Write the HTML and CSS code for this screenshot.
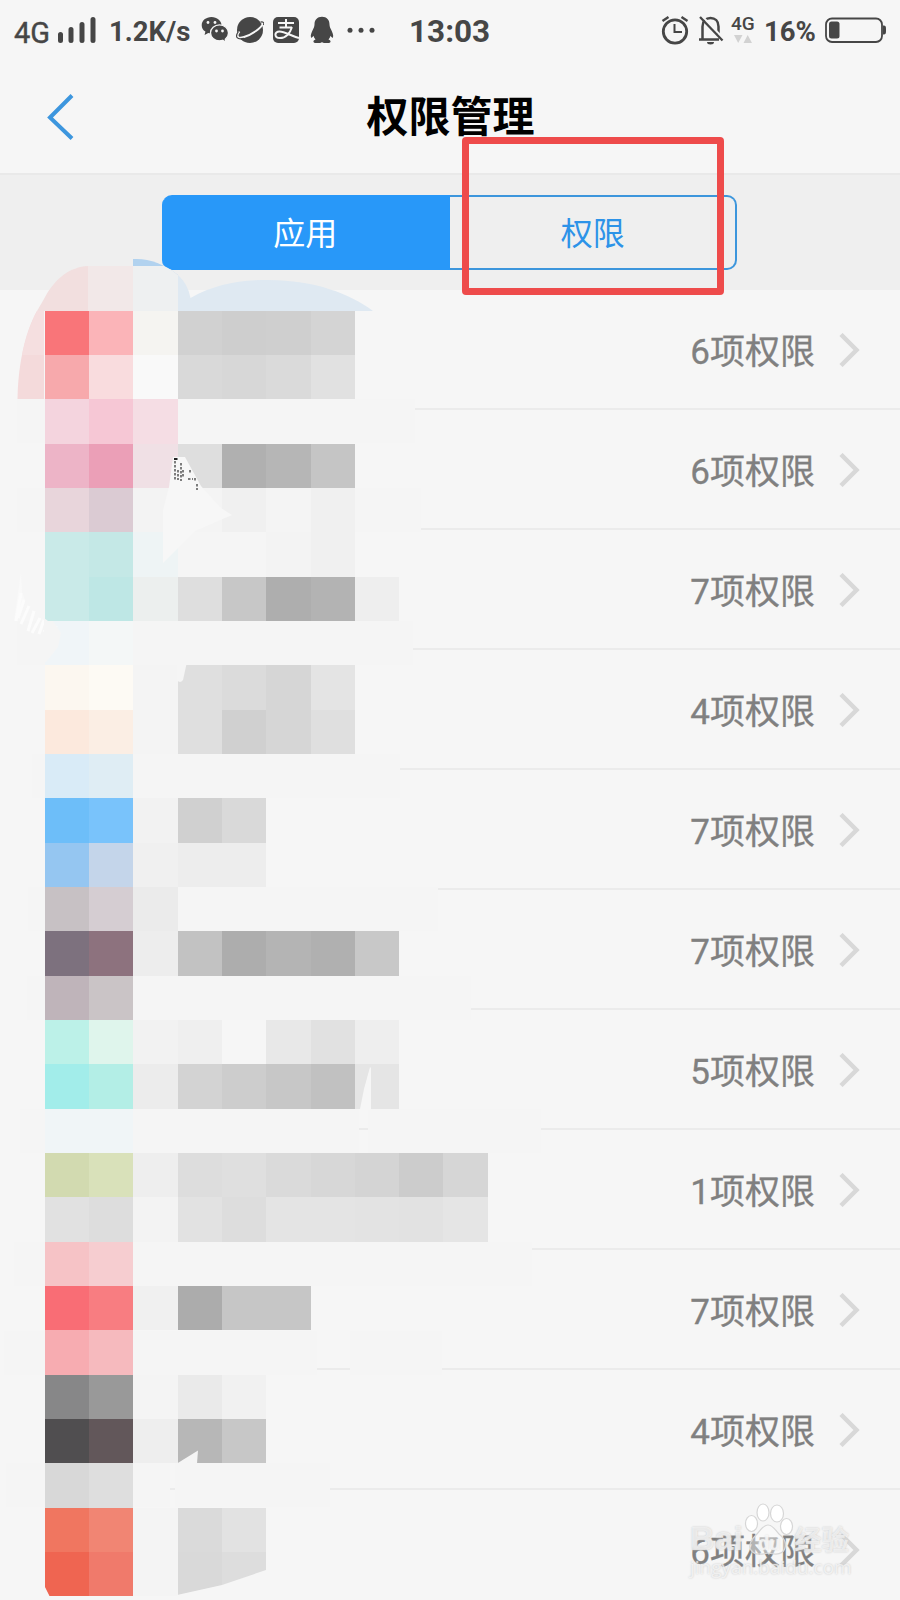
FILE: index.html
```
<!DOCTYPE html>
<html lang="zh-CN">
<head>
    <meta charset="UTF-8">
    <title>权限管理</title>
    <link rel="stylesheet" href="styles.css">
</head>
<body>
<div class="status">
    <span class="net">4G</span>
    <svg class="signal" width="38" height="26" viewBox="0 0 38 26"><path d="M2.500 17.500v6M13 12.500v11M24 7.500v16M35 2.500v21" stroke="#464646" stroke-width="5" stroke-linecap="round"/></svg>
    <span class="speed">1.2K/s</span>
    <svg class="ico wechat" width="28" height="28" viewBox="0 0 28 28">
        <path d="M10.500 1C5 1 .7 4.600.7 9.200c0 2.700 1.400 5 3.700 6.400L3.600 19l3.600-2.100c1 .3 2.100.4 3.300.4 5.500 0 10-3.600 10-8.100S16 1 10.500 1z" fill="#464646"/>
        <path d="M18.500 8.800c-5 0-9 3.600-9 8s4 8 9 8c1.100 0 2.200-.2 3.200-.5l3.300 2-.7-3.100c2-1.500 3.200-3.700 3.200-6.300 0-4.500-4-8.100-9-8.100z" fill="#464646" stroke="#f6f6f6" stroke-width="1.300"/>
        <g fill="#f6f6f6"><circle cx="7" cy="6.500" r="1.400"/><circle cx="14" cy="6.500" r="1.400"/><circle cx="15.500" cy="15" r="1.400"/><circle cx="21.500" cy="15" r="1.400"/></g>
    </svg>
    <svg class="ico planet" width="28" height="28" viewBox="0 0 28 28">
        <circle cx="14" cy="14" r="13" fill="#464646"/>
        <path d="M3.500 15.500C-.5 20.500 1.500 23 8 21 16 18.500 25.500 12 27 7.500c.3-1.300-.8-1.800-2.500-1.200" fill="none" stroke="#f6f6f6" stroke-width="2"/>
        <path d="M2.500 15.500C-1.500 21 1 24 8 22.300M27.500 9c1-2.500-.5-3.600-3-2.900" fill="none" stroke="#464646" stroke-width="1.200"/>
    </svg>
    <svg class="ico alipay" width="28" height="28" viewBox="0 0 28 28">
        <rect x="1" y="1" width="26" height="26" rx="5" fill="#464646"/>
        <path d="M6 7h16M14 3v8.500M7.500 11.500h12.500M20 11c-2 6.500-6.500 11-12 11-6 0-6-6.500-.5-6.500C13 15.500 19 20 27 22" fill="none" stroke="#f6f6f6" stroke-width="2"/>
    </svg>
    <svg class="ico qq" width="24" height="28" viewBox="0 0 24 28">
        <path d="M12 .8C7.200.8 4.500 4 4.500 8.500c-.1 2-.6 3-1.300 4.500C1.500 16.500.3 19 1 21.500c.6.800 1.700-.5 2.500-1.700.3 1.500 1 2.700 2 3.700-1.500.7-2.300 1.500-2 2.400.6 1.600 7 1.400 8.500.3 1.500 1.100 7.900 1.300 8.500-.3.300-.9-.5-1.700-2-2.400 1-1 1.700-2.200 2-3.700.8 1.200 1.900 2.500 2.500 1.700.7-2.500-.5-5-2.200-8.500-.7-1.500-1.200-2.500-1.300-4.500C19.500 4 16.800.8 12 .8z" fill="#464646"/>
    </svg>
    <svg class="ico dots" width="28" height="28" viewBox="0 0 28 28"><g fill="#464646"><circle cx="3" cy="14.300" r="2.500"/><circle cx="14" cy="14.300" r="2.500"/><circle cx="25" cy="14.300" r="2.500"/></g></svg>
    <span class="clock">13:03</span>
    <svg class="ico alarm" width="28" height="30" viewBox="0 0 28 30">
        <g fill="none" stroke="#464646"><circle cx="14" cy="16.500" r="11.700" stroke-width="2.800"/><path d="M13.500 9v8h7.500" stroke-width="2"/><path d="M1.500 6l6-4M26.500 6l-6-4" stroke-width="2.400"/></g>
    </svg>
    <svg class="ico bell" width="26" height="30" viewBox="0 0 26 30">
        <path d="M4.500 24V11.500C4.500 6 8 3 12.500 3S20.500 6 20.500 11.500V19M1 24.500h20" fill="none" stroke="#464646" stroke-width="2.500"/>
        <path d="M4 1l21 22" stroke="#f6f6f6" stroke-width="2"/>
        <path d="M2 2l22.500 23.500" stroke="#464646" stroke-width="2.300"/>
        <path d="M9 27h7a3.500 2.500 0 0 1-7 0z" fill="#464646"/>
    </svg>
    <span class="sim">4G<svg width="18" height="8" viewBox="0 0 18 8"><path d="M0 0h8.500L4.200 8zM9.500 8h8.500L13.700 0z" fill="#d2d2d2"/></svg></span>
    <span class="percent">16%</span>
    <svg class="ico battery" width="62" height="28" viewBox="0 0 62 28">
        <rect x="1" y="2.500" width="56" height="23.500" rx="6" fill="none" stroke="#464646" stroke-width="1.800"/>
        <rect x="4" y="5.500" width="10.500" height="17" rx="2.500" fill="#464646"/>
        <path d="M58 9.500c3 0 3 1 3 4.500s0 4.500-3 4.500z" fill="#464646"/>
    </svg>
</div>
<div class="header">
    <svg class="back" width="28" height="48" viewBox="0 0 28 48"><path d="M25 2.500L3 24.500l22 21" fill="none" stroke="#3d96de" stroke-width="4"/></svg>
    <h1>权限管理</h1>
</div>
<div class="tabs">
    <div class="tab on">应用</div>
    <div class="tab">权限</div>
    <div class="mark"></div>
</div>
<ul id="list" class="list"></ul>

<svg class="mosaic" width="560" height="1350" viewBox="0 250 560 1350">
    <!-- top edge of the brushed area -->
    <path d="M133 259C148 258 163 263 178 275V311H133z" fill="#b1d2ef"/>
    <path d="M17.500 399C18 360 27 329 37 311H44V399z" fill="#f4dadb"/>
    <path d="M22 355C25 338 31 322 37 311H44V355z" fill="#f5dfe0"/>
    <path d="M37 311L44 299C55 278 70 267 88 266V311z" fill="#f2dfdf"/>
    <path d="M88 266H133V311H88z" fill="#f2e8e8"/>
    <path d="M133 266H164Q171 269 178 275V311H133z" fill="#eef0f1"/>
    <path d="M178 275Q188 284 190.500 298C215 284 240 280 268 280 315 280 350 294 373 311H178z" fill="#dfe9f2"/>
    <g id="covers" fill="#f5f5f5"></g>
    <g id="cells" shape-rendering="crispEdges"></g>
    <!-- brush gaps -->
    <path d="M173 457h12L201 486 221 508 232 515 195 531 163 563V510L169 487z" fill="#f7f7f7"/>
    <path d="M175 461v20M178 470v10M181 463v18M183 470v7M188 479h5M190 470v4M195 478v4M197 484v6" stroke="#555" stroke-width="1.500" stroke-dasharray="2.500 1.500" fill="none"/>
    <path d="M174 459h3.500" stroke="#222" stroke-width="2"/>
    <path d="M21 573l-3 20-4 28 5-3 6-18-3-8z" fill="#f9f9f9"/>
    <path d="M21 593l-5 28M24 600l-6 18M29 606l-8 18M34 611l-6 20M40 618l-8 15M44 620l-5 14M50 624l-6 8M56 626l-3 10" stroke="#fcfcfc" stroke-width="3"/>
    <path d="M44 618l4 3h-4zM53 621l8 12-3 14-12 15H44V621z" fill="#f5f5f5"/>
    <path d="M177 664h9.500L183 680q-3 4-6 0z" fill="#f5f5f5"/>
    <path d="M370 1067l-6 22-4 20v1h11v-42z" fill="#f6f6f6"/>
    <path d="M177 1463.500l21-13-1 13z" fill="#f5f5f5"/>
    <path d="M44 1585l6 12h-6zM177 1595l45-10 44-15v28h-89z" fill="#f6f6f6"/>
</svg>

<div class="logo">
    <div class="logo-name"><span class="bai">Bai</span><span class="du">du</span>经验</div>
    <svg class="paw" width="50" height="54" viewBox="0 0 50 54"><g fill="#fff" stroke="#d6d6d6" stroke-width="1.200"><ellipse cx="7.500" cy="20.500" rx="6" ry="8"/><ellipse cx="19" cy="9.500" rx="6" ry="8.500"/><ellipse cx="33" cy="10.500" rx="6.500" ry="8.500"/><ellipse cx="42.500" cy="23.500" rx="6" ry="8"/><path d="M24 22c5 0 7 5 11 9 5 4 8 8 6 14-2 7-9 7-17 5-8 2-16 2-18-5-1-6 3-10 7-14s6-9 11-9z" fill-opacity=".4"/></g></svg>
    <div class="logo-url">jingyan.baidu.com</div>
</div>
<script>
    var counts = [6, 6, 7, 4, 7, 7, 5, 1, 7, 4, 6];
    var html = "";
    for(var i = 0; i < counts.length; i++){
        html += '<li class="row"><span>' + counts[i] + '项权限</span>' +
            '<svg width="21" height="34" viewBox="0 0 21 34"><path d="M2 1.500L17.500 17 2 32.500" fill="none" stroke="#d8d8d8" stroke-width="4.500"/></svg></li>';
    }
    document.getElementById("list").innerHTML = html;

    // each line is one mosaic row, starting at the second column
    var colors = [
        "f97579 fbb4b8 f5f4f1 d1d1d1 cecece cfcfcf d4d4d4",
        "f7a9ac f9dcde f9f9f9 d9d9d9 d7d7d7 dadada e1e1e1",
        "f4d4de f6c7d5 f5dde4",
        "edb4c7 eb9fb7 f0e0e5 dedede b0b0b0 b6b6b6 c5c5c5",
        "e8d5db dbcbd3 f3f3f3 f4f4f4 f0f0f0 f4f4f4 f0f0f0",
        "c9eae8 c4e8e6 eef4f5 f5f5f5 f5f5f5 f3f3f3 f0f0f0",
        "c9eae8 bee7e5 ecefee dedede c7c7c7 aeaeae b3b3b3 eeeeee",
        "f0f5f8 f4f7f7",
        "fcf7f0 fdfaf4 f4f4f4 dfdfdf dbdbdb d6d6d6 e4e4e4",
        "fce9dd fbeee4 f4f4f4 dfdfdf d0d0d0 d6d6d6 dfdfdf",
        "d9ebf7 dfedf4",
        "6dbef9 79c3fb f2f2f2 d0d0d0 d9d9d9",
        "95c6f1 c4d5ea f0f0f0 ededed ededed",
        "c7c1c4 d5cdd2 ebebeb",
        "7d717e 8d727e ededed c2c2c2 adadad b4b4b4 b0b0b0 c8c8c8",
        "bfb4ba cac4c6",
        "bcf1e8 dff5ec f2f2f2 efefef f6f6f6 e8e8e8 e1e1e1 eeeeee",
        "a2edea b3eee6 ececec d3d3d3 cdcdcd c7c7c7 c1c1c1 e5e5e5",
        "f0f5f7 f0f5f7",
        "d2dab0 d9e1ba eeeeee dddddd dfdfdf dadada d7d7d7 d4d4d4 cccccc d6d6d6",
        "e1e1e1 dddddd f3f3f3 e2e2e2 dddddd e4e4e4 e4e4e4 e3e3e3 e2e2e2 e5e5e5",
        "f6c3c6 f6cdd0",
        "f96d75 f87d81 f0f0f0 acacac c6c6c6 c6c6c6",
        "f7acb1 f6babe",
        "878788 999999 f4f4f4 eaeaea f1f1f1",
        "504e50 62575a eeeeee b7b7b7 c7c7c7",
        "d8d8d8 dedede",
        "f07660 f18573 f4f4f4 dadada e2e2e2",
        "ef6551 f07a6b f4f4f4 d9d9d9 dddddd"
    ];
    var size = 44.33;
    var cells = "";
    for(var r = 0; r < colors.length; r++){
        var line = colors[r].split(" ");
        var y = Math.round(310.8 + r * size);
        var h = Math.round(310.8 + (r + 1) * size) - y;
        for(var c = 0; c < line.length; c++){
            var x = Math.round((c + 1) * size + 0.2);
            var w = Math.round((c + 2) * size + 0.2) - x;
            cells += '<rect x="' + x + '" y="' + y + '" width="' + w + '" height="' + h + '" fill="#' + line[c] + '"/>';
        }
    }
    document.getElementById("cells").innerHTML = cells;

    // parts of the dividers hidden by the brush: [y, from, to]
    var hidden = [[399, 17, 415], [488, 17, 421], [621, 17, 413], [754, 32, 400], [887, 28, 438],
        [976, 27, 471], [1109, 20, 359], [1109, 368, 541], [1242, 14, 532], [1331, 4, 317], [1331, 350, 442],
        [1463, 6, 170], [1463, 175, 330]];
    // no divider left of the icons
    var edges = '<rect x="0" y="405" width="44" height="1090" fill="#f6f6f6"/>';
    for(var k = 0; k < hidden.length; k++){
        var a = hidden[k];
        edges += '<rect x="' + a[1] + '" y="' + a[0] + '" width="' + (a[2] - a[1]) + '" height="44"/>';
    }
    document.getElementById("covers").innerHTML = edges;
</script>
</body>
</html>
```
FILE: styles.css
```
*{margin:0;padding:0;box-sizing:border-box;}
body{position:relative;width:900px;height:1600px;overflow:hidden;background:#f6f6f6;font-family:Roboto,"Noto Sans CJK SC",sans-serif;}
svg{display:block;flex:none;}
.status{display:flex;height:62px;color:#464646;white-space:nowrap;line-height:32px;padding-left:14px;font-weight:bold;}
.status span{flex:none;}
.net{width:38px;padding-top:17px;font-size:29px;font-weight:normal;-webkit-text-stroke:.4px #464646;}
.signal{margin:17px 0 0 6px;}
.speed{width:82px;margin-left:13px;padding-top:16px;font-size:27.5px;}
.ico{margin-top:16px;}
.wechat{margin-left:10px;}
.planet{margin-left:7px;}
.alipay{margin-left:8px;}
.qq{margin-left:10px;}
.dots{margin-left:13px;}
.clock{width:84px;margin-left:34px;padding-top:16px;font-size:31.5px;}
.alarm{margin:15px 0 0 168px;}
.bell{margin:15px 0 0 9px;}
.sim{width:24px;margin-left:7px;padding-top:14px;font-size:19px;font-weight:500;line-height:19px;}
.sim svg{margin:2px 0 0 3px;}
.percent{width:52px;margin-left:9px;padding-top:16px;font-size:27.5px;}
.battery{margin-left:9px;}
.header{display:flex;height:113px;border-bottom:2px solid #e9e9e9;}
.back{margin:31px 0 0 47px;}
h1{width:751px;height:62px;margin-top:25px;text-align:center;font-size:42px;line-height:62px;color:#000;}
.tabs{position:relative;display:flex;height:115px;padding:20px 163px 0 162px;background:#efefef;}
.tab{width:288px;height:75px;border:2px solid #3d96dc;border-left:0;border-radius:0 10px 10px 0;font-size:32px;line-height:75px;text-align:center;text-indent:1px;color:#2d93e8;}
.tab.on{background:#2898f9;border-color:#2898f9;border-radius:10px 0 0 10px;color:#fff;}
.mark{position:absolute;left:462px;top:-38px;width:262px;height:158px;border:7px solid #ee4b4b;border-radius:4px;}
.list{list-style:none;}
.row{display:flex;align-items:center;justify-content:flex-end;height:120px;padding-right:40px;border-bottom:2px solid #ebebeb;font-size:35px;color:#808080;}
.row span{margin-top:-2px;-webkit-text-stroke:.3px #808080;}
.row svg{margin:2px 0 0 24px;}
.mosaic{position:absolute;left:0;top:250px;}
.logo{position:absolute;left:690px;top:1503px;width:170px;color:rgba(255,255,255,.65);text-shadow:0 0 2px #c4c4c4;}
.logo-name{display:flex;align-items:baseline;height:52px;padding-top:15px;font-size:27.5px;line-height:40px;font-weight:bold;white-space:nowrap;}
.bai{width:53px;font-family:"Liberation Sans",sans-serif;font-size:34px;}
.du{width:51px;padding-left:15px;font-size:20px;}
.paw{position:absolute;left:54px;top:0;}
.logo-url{font-size:19px;line-height:24px;font-family:"Open Sans",sans-serif;}
```
